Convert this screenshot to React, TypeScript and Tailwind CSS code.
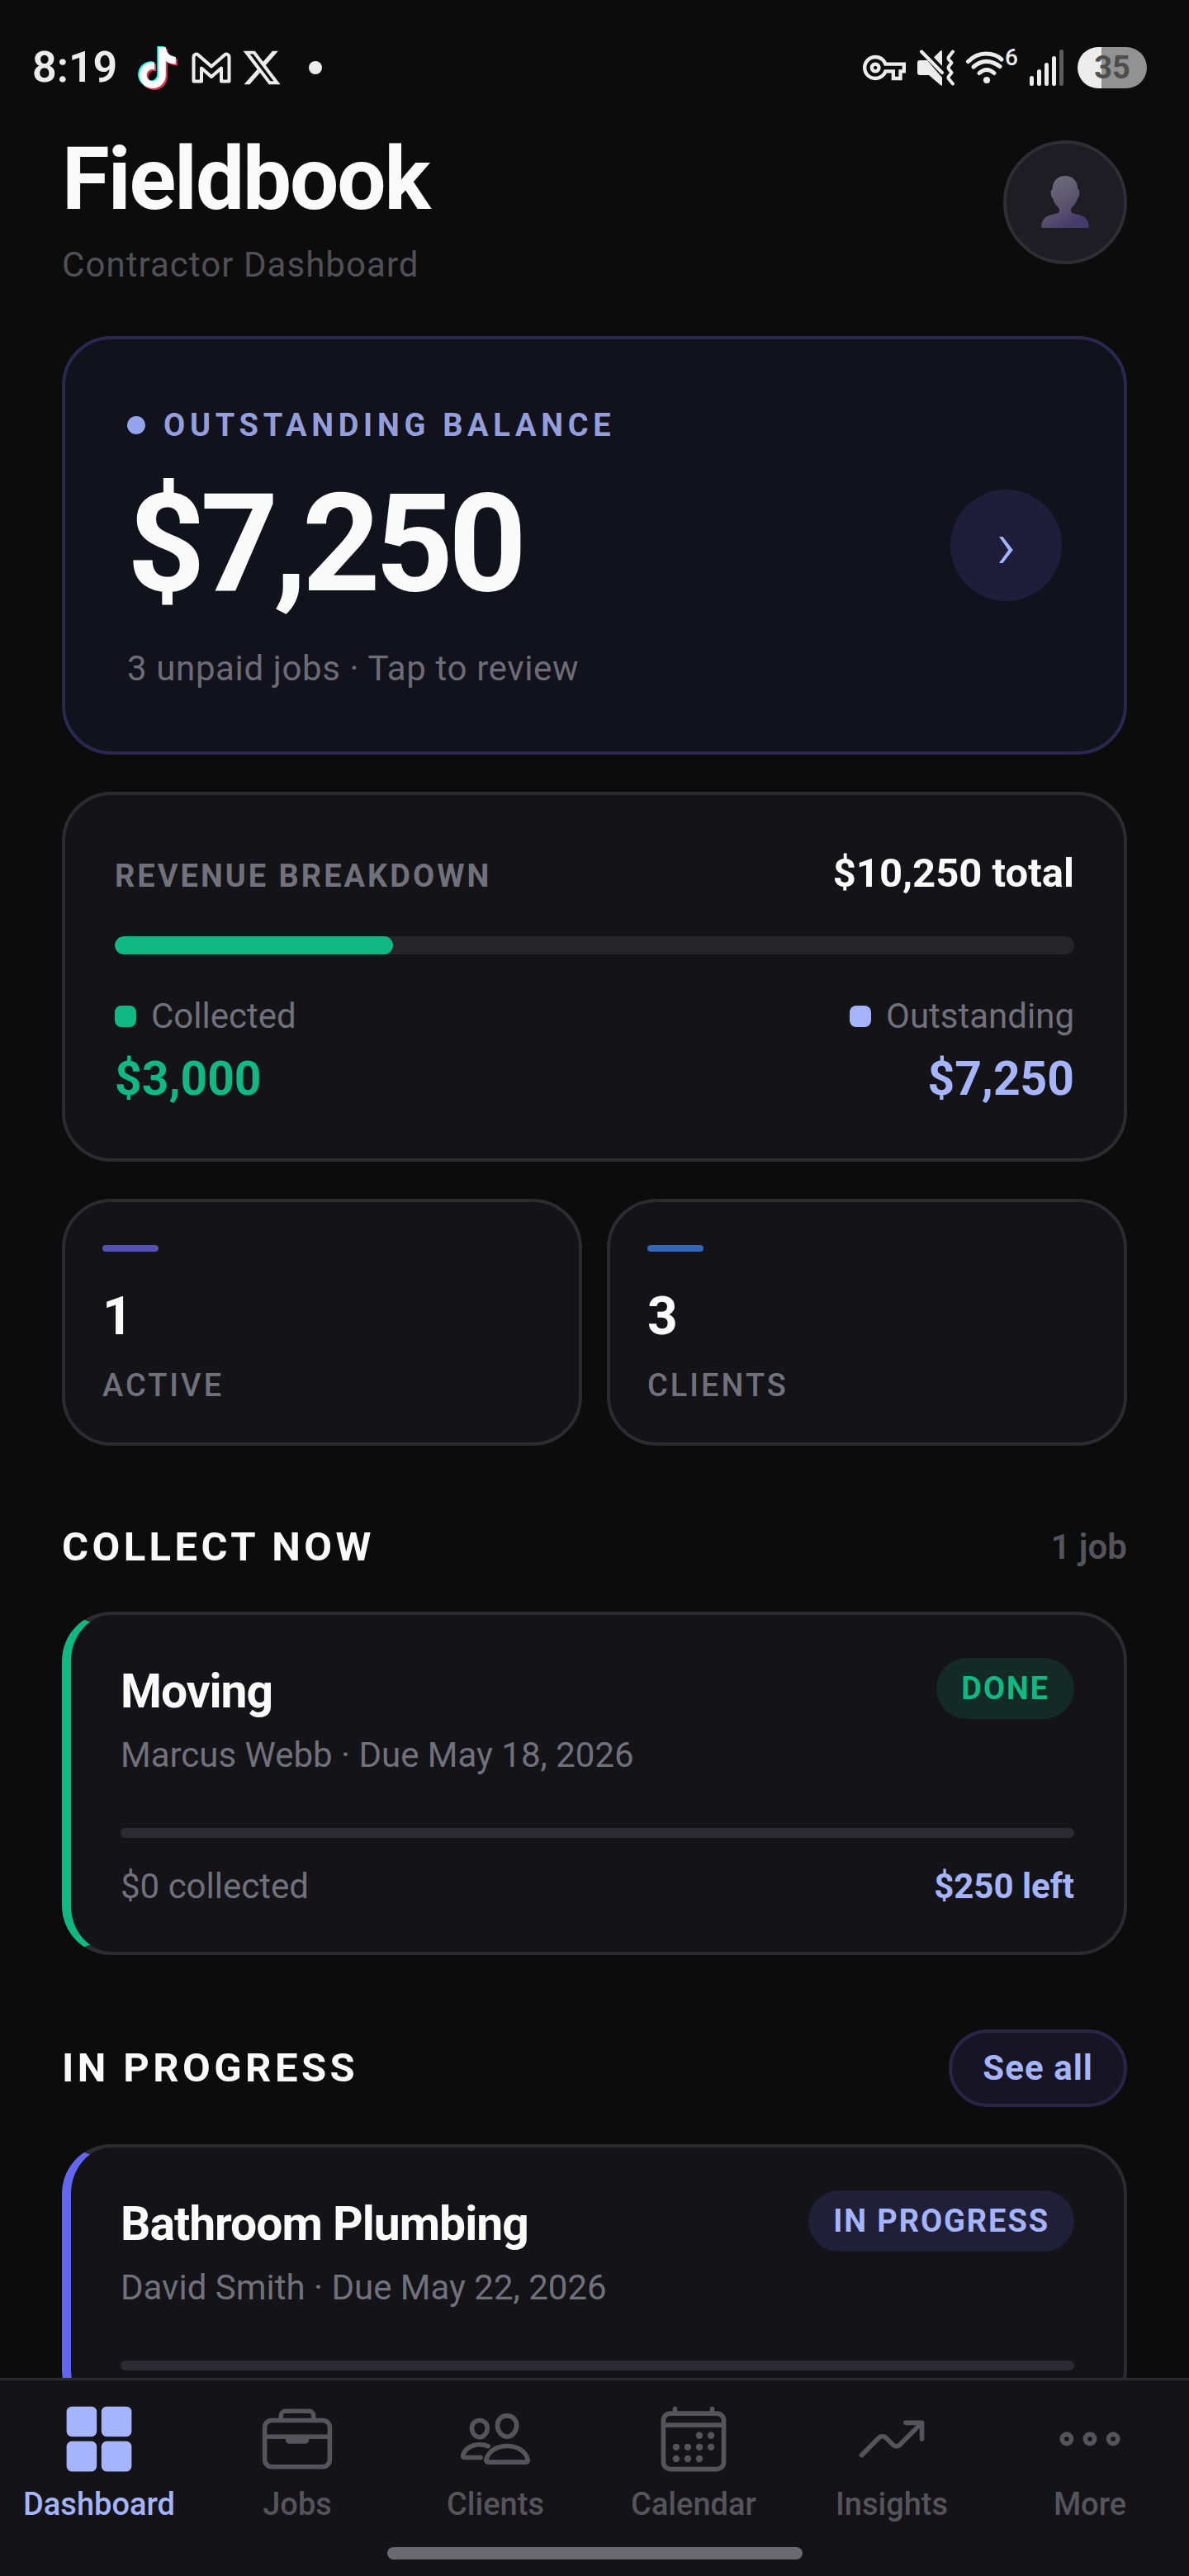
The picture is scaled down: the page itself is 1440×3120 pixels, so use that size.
import React from "react";
import clsx from "clsx";
import { FaTiktok, FaXTwitter } from "react-icons/fa6";
import {
    IoBriefcaseOutline,
    IoCalendarOutline,
    IoEllipsisHorizontalOutline,
    IoGrid,
    IoPeopleOutline,
    IoTrendingUpOutline,
} from "react-icons/io5";
import { MdOutlineVpnKey } from "react-icons/md";

const tabs = [
    { label: "Dashboard", icon: IoGrid, active: true },
    { label: "Jobs", icon: IoBriefcaseOutline },
    { label: "Clients", icon: IoPeopleOutline },
    { label: "Calendar", icon: IoCalendarOutline },
    { label: "Insights", icon: IoTrendingUpOutline },
    { label: "More", icon: IoEllipsisHorizontalOutline },
];

const collected = 3000;
const total = 10250;

const GmailIcon = () => (
    <svg width="48" height="38" viewBox="0 0 48 38" fill="none" aria-hidden="true">
        <path
            d="M2.5 35.5V6.5C2.5 3 5.500 1.500 8 3.500L24 17.500 40 3.500C42.500 1.500 45.500 3 45.500 6.500V35.500H36V19.500L24 30 12 19.500V35.500Z"
            stroke="#ececec"
            strokeWidth="4"
            strokeLinejoin="round"
        />
    </svg>
);

const MuteIcon = () => (
    <svg width="46" height="44" viewBox="0 0 46 44" fill="#ececec" aria-hidden="true">
        <path d="M3 13H12L30 34V43C30 44 29 44 28 43L14 31H3Q0 31 0 28V16Q0 13 3 13Z" />
        <path d="M20 9.500L28 1.500Q30 0 30 2.500V20Z" />
        <path d="M5 2.500L30 28" stroke="#ececec" strokeWidth="4" strokeLinecap="round" />
        <path
            d="M43 2.500L38 9Q37 10.500 38 12L41.500 16L38 20.500Q37 22 38 23.500L41.500 28L38 32.500Q37 34 38 35.500L43 41.500"
            fill="none"
            stroke="#ececec"
            strokeWidth="4"
            strokeLinecap="round"
            strokeLinejoin="round"
        />
    </svg>
);

const WifiIcon = () => (
    <svg width="48" height="40" viewBox="0 0 48 40" fill="none" aria-hidden="true">
        <g stroke="#ececec" strokeWidth="5" strokeLinecap="round">
            <path d="M3.500 12.500Q13 3 25 3T44 10" />
            <path d="M10 19Q25 6 42 18.500" />
            <path d="M17 26.500Q26 18.500 35 26.500" />
        </g>
        <circle cx="26" cy="35" r="4" fill="#ececec" />
    </svg>
);

const SignalIcon = () => (
    <svg width="42" height="44" viewBox="0 0 42 44" fill="#ececec" aria-hidden="true">
        <rect x="0" y="32" width="5" height="12" rx="2.500" />
        <rect x="9" y="24" width="5" height="20" rx="2.500" />
        <rect x="18" y="16" width="5" height="28" rx="2.500" />
        <rect x="27" y="8" width="5" height="36" rx="2.500" />
        <rect x="36" y="0" width="5" height="44" rx="2.500" fill="#5c5c5c" />
    </svg>
);

const PersonIcon = () => (
    <svg width="60" height="66" viewBox="0 0 60 66" aria-hidden="true">
        <defs>
            <linearGradient id="person" x1="0" y1="0" x2="0.600" y2="1">
                <stop offset="0" stopColor="#74717f" />
                <stop offset="0.600" stopColor="#5a556d" />
                <stop offset="1" stopColor="#453a6c" />
            </linearGradient>
        </defs>
        <path
            d="M30 1C39 1 45 7 45.500 17 48 18 48 26 45 28 43 35 40 37 37 41V44C39 50 57 44 59 62Q59 64 57 64H3Q1 64 1 62C3 44 21 50 23 44V41C20 37 17 35 15 28 12 26 12 18 14.500 17 15 7 21 1 30 1Z"
            fill="url(#person)"
        />
    </svg>
);

const StatusBar = () => (
    <div className="flex h-[150px] shrink-0 items-center justify-between pl-[39px] pr-[51px] pt-3.5">
        <div className="flex items-center">
            <span className="text-[52px] font-semibold leading-none text-[#ececec]">8:19</span>
            <FaTiktok className="ml-6 size-[50px] text-white [filter:drop-shadow(-2px_-1px_0_#25f4ee)_drop-shadow(2px_2px_0_#e0314f)]" />
            <span className="ml-4">
                <GmailIcon />
            </span>
            <FaXTwitter className="ml-3 size-[50px] text-[#ececec]" />
            <span className="ml-8 size-4 rounded-full bg-[#ececec]" />
        </div>
        <div className="flex items-center">
            <MdOutlineVpnKey className="size-[52px] text-[#ececec]" />
            <span className="ml-3.5">
                <MuteIcon />
            </span>
            <span className="ml-3">
                <WifiIcon />
            </span>
            <span className="-mt-6 text-[28px] font-medium leading-none text-[#ececec]">6</span>
            <span className="ml-3.5">
                <SignalIcon />
            </span>
            <span className="ml-4 flex h-[50px] w-[84px] items-center justify-center rounded-full bg-[linear-gradient(90deg,#ececec_35%,#929292_35%)] text-[38px] font-bold leading-none text-[#4d4d4d]">
                35
            </span>
        </div>
    </div>
);

const Legend = ({
    label,
    amount,
    color,
    dot,
    end,
}: {
    label: string;
    amount: string;
    color: string;
    dot: string;
    end?: boolean;
}) => (
    <div className={clsx("flex flex-col", end && "items-end")}>
        <div className="flex items-center gap-[18px]">
            <span className={clsx("size-[26px] rounded-lg", dot)} />
            <span className="text-[42px] leading-[48px] text-zinc-500">{label}</span>
        </div>
        <p className={clsx("mt-5 text-[57px] font-bold leading-[64px]", color)}>{amount}</p>
    </div>
);

const Stat = ({ value, label, accent }: { value: number; label: string; accent: string }) => (
    <div className="flex-1 rounded-[60px] border-4 border-[#2b2b30] bg-[#141318] px-[45px] pb-[46px] pt-[52px]">
        <div className={clsx("h-2 w-[68px] rounded-full", accent)} />
        <p className="mt-[47px] text-[64px] font-bold leading-[64px] text-neutral-50">{value}</p>
        <p className="mt-7 text-[38px] font-medium leading-[46px] tracking-[3px] text-zinc-500">
            {label}
        </p>
    </div>
);

const SectionHeader = ({ title, children }: { title: string; children: React.ReactNode }) => (
    <div className="mb-[45px] mt-[90px] flex items-center justify-between">
        <h2 className="text-[49px] font-bold leading-[66px] tracking-[0.09em] text-neutral-50">
            {title}
        </h2>
        {children}
    </div>
);

const JobCard = ({
    title,
    meta,
    status,
    accent,
    badge,
    children,
}: {
    title: string;
    meta: string;
    status: string;
    accent: string;
    badge: string;
    children?: React.ReactNode;
}) => (
    <article
        className={clsx(
            "rounded-[60px] border-4 border-l-[11px] border-[#2b2b30] bg-[#141318] px-[60px] pb-[55px] pt-[52px]",
            accent
        )}
    >
        <div className="flex items-start justify-between">
            <div>
                <h3 className="text-[57px] font-bold leading-[82px] tracking-[-1px] text-neutral-50">
                    {title}
                </h3>
                <p className="mt-2 text-[42px] leading-[56px] text-zinc-500">{meta}</p>
            </div>
            <span
                className={clsx(
                    "rounded-full px-[30px] text-[38px] font-bold leading-[74px] tracking-wider",
                    badge
                )}
            >
                {status}
            </span>
        </div>
        <div className="mt-[60px] h-3 rounded-full bg-[#2c2b32]" />
        {children}
    </article>
);

const TabBar = () => (
    <nav className="shrink-0 border-t-[3px] border-[#2b2b30] bg-[#141318] pb-5 pt-[26px]">
        <div className="grid grid-cols-6">
            {tabs.map(({ label, icon: Icon, active }) => (
                <a
                    key={label}
                    href={`#${label.toLowerCase()}`}
                    className={clsx(
                        "flex flex-col items-center gap-3 text-[38px] font-medium leading-[44px]",
                        active ? "text-[#a5b4fc]" : "text-[#55545a]"
                    )}
                >
                    <Icon className="size-[90px]" />
                    {label}
                </a>
            ))}
        </div>
        <div className="mx-auto mt-[30px] h-[15px] w-[503px] rounded-full bg-[#6a696f]" />
    </nav>
);

const App = () => {
    return (
        <div className="flex h-screen flex-col bg-[#0c0c0d] font-[Roboto,sans-serif]">
            <StatusBar />

            <main className="min-h-0 flex-1 overflow-y-auto px-[75px] pt-5 [scrollbar-width:none]">
                <header className="flex items-start justify-between">
                    <div>
                        <h1 className="text-[105px] font-bold leading-[96px] tracking-[-2px] text-neutral-50">
                            Fieldbook
                        </h1>
                        <p className="mt-[31px] text-[42px] leading-[48px] tracking-wide text-[#515056]">
                            Contractor Dashboard
                        </p>
                    </div>
                    <button
                        type="button"
                        aria-label="Profile"
                        className="flex size-[150px] items-center justify-center rounded-full border-4 border-[#2f2e34] bg-[#1e1d23]"
                    >
                        <PersonIcon />
                    </button>
                </header>

                <a
                    href="#unpaid"
                    className="mt-[62px] flex items-center justify-between rounded-[60px] border-4 border-[#2a2850] bg-[#12121c] px-[75px] py-[76px]"
                >
                    <div>
                        <div className="flex items-center gap-[22px]">
                            <span className="size-[22px] rounded-full bg-[#95a2ec]" />
                            <span className="text-[38px] font-bold leading-[56px] tracking-[0.15em] text-[#949edb]">
                                OUTSTANDING BALANCE
                            </span>
                        </div>
                        <p className="mt-9 text-[165px] font-bold leading-[160px] tracking-[-6px] text-neutral-50">
                            $7,250
                        </p>
                        <p className="mt-[47px] text-[42px] leading-[48px] tracking-[0.015em] text-[#6d6c76]">
                            3 unpaid jobs · Tap to review
                        </p>
                    </div>
                    <span className="flex size-[135px] items-center justify-center rounded-full bg-[#1e1e3b] text-[84px] font-light leading-none text-[#a5b4fc]">
                        ›
                    </span>
                </a>

                <section className="mt-[45px] rounded-[60px] border-4 border-[#2b2b30] bg-[#141318] px-[60px] pb-16 pt-[67px]">
                    <div className="flex items-baseline justify-between">
                        <h2 className="text-[38px] font-bold leading-[44px] tracking-[3px] text-zinc-500">
                            REVENUE BREAKDOWN
                        </h2>
                        <p className="text-[49px] font-bold leading-[56px] text-neutral-50">
                            $10,250 total
                        </p>
                    </div>
                    <div className="mt-12 h-[22px] overflow-hidden rounded-full bg-[#26252a]">
                        <div
                            className="h-full rounded-full bg-[#10b981]"
                            style={{ width: `${Math.floor((collected / total) * 100)}%` }}
                        />
                    </div>
                    <div className="mt-[51px] flex justify-between">
                        <Legend
                            label="Collected"
                            amount="$3,000"
                            color="text-[#10b981]"
                            dot="bg-[#10b981]"
                        />
                        <Legend
                            label="Outstanding"
                            amount="$7,250"
                            color="text-[#a5b4fc]"
                            dot="bg-[#a5b4fc]"
                            end
                        />
                    </div>
                </section>

                <div className="mt-[45px] flex gap-[30px]">
                    <Stat value={1} label="ACTIVE" accent="bg-[#5551b4]" />
                    <Stat value={3} label="CLIENTS" accent="bg-[#3367b8]" />
                </div>

                <SectionHeader title="COLLECT NOW">
                    <span className="text-[42px] font-semibold leading-[48px] text-[#55545a]">
                        1 job
                    </span>
                </SectionHeader>
                <JobCard
                    title="Moving"
                    meta="Marcus Webb · Due May 18, 2026"
                    status="DONE"
                    accent="border-l-[#10b981]"
                    badge="bg-[#132a25] text-[#10b981]"
                >
                    <div className="mt-[35px] flex justify-between text-[42px] leading-[48px]">
                        <span className="text-zinc-500">$0 collected</span>
                        <span className="font-bold text-[#a5b4fc]">$250 left</span>
                    </div>
                </JobCard>

                <SectionHeader title="IN PROGRESS">
                    <button
                        type="button"
                        className="rounded-full border-4 border-[#2a2548] bg-[#171524] px-[37px] text-[42px] font-bold leading-[86px] tracking-wide text-[#a5b4fc]"
                    >
                        See all
                    </button>
                </SectionHeader>
                <JobCard
                    title="Bathroom Plumbing"
                    meta="David Smith · Due May 22, 2026"
                    status="IN PROGRESS"
                    accent="border-l-[#6366f1]"
                    badge="bg-[#201f38] text-[#a5b4fc]"
                />
            </main>

            <TabBar />
        </div>
    );
};

export default App;
